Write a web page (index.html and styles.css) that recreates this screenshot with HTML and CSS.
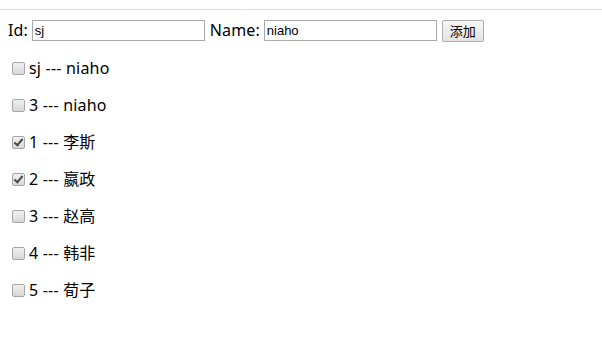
FILE: index.html
```html
<!DOCTYPE html>
<html>
<head>
<meta charset="utf-8">
<link rel="stylesheet" href="styles.css">
</head>
<body>
<div class="rule"></div>
<div class="app">
  <div class="form">
    <label class="lbl">Id:</label>
    <input class="field" type="text" value="sj">
    <label class="lbl">Name:</label>
    <input class="field" type="text" value="niaho">
    <button class="btn">添加</button>
  </div>
  <div class="list">
    <p class="item"><input class="check" type="checkbox"><span>sj --- niaho</span></p>
    <p class="item"><input class="check" type="checkbox"><span>3 --- niaho</span></p>
    <p class="item"><input class="check" type="checkbox" checked><span>1 --- 李斯</span></p>
    <p class="item"><input class="check" type="checkbox" checked><span>2 --- 嬴政</span></p>
    <p class="item"><input class="check" type="checkbox"><span>3 --- 赵高</span></p>
    <p class="item"><input class="check" type="checkbox"><span>4 --- 韩非</span></p>
    <p class="item"><input class="check" type="checkbox"><span>5 --- 荀子</span></p>
  </div>
</div>
</body>
</html>
```
FILE: styles.css
```css
html, body {
  margin: 0;
  padding: 0;
  background: #fff;
}
body {
  font-family: "Noto Sans", "Noto Sans CJK SC", sans-serif;
  font-size: 16px;
  color: #000;
}
.rule {
  margin-top: 9px;
  height: 1px;
  background: #dcdcdc;
}
.app {
  padding: 9px 8px 0 8px;
}
.form {
  display: flex;
  align-items: center;
  height: 23px;
  line-height: 21px;
}
.lbl {
  margin-right: 4px;
  letter-spacing: 0.1px;
}
.field {
  box-sizing: border-box;
  width: 173px;
  height: 21px;
  margin: 0 5px 0 0;
  padding: 1px 2px;
  border: 1px solid #a9a9a9;
  font-family: "Liberation Sans", sans-serif;
  font-size: 13px;
  color: #000;
  outline: none;
}
.btn {
  box-sizing: border-box;
  height: 22px;
  width: 42px;
  margin: 0;
  padding: 0;
  border: 1px solid #adadad;
  border-radius: 2px;
  background: linear-gradient(#f6f6f6, #e4e4e4);
  font-family: "Noto Sans CJK SC", sans-serif;
  font-size: 13px;
  color: #000;
}
.item {
  display: flex;
  align-items: center;
  margin: 16px 0;
  line-height: 21px;
  height: 21px;
  letter-spacing: 0.2px;
}
.check {
  -webkit-appearance: none;
  appearance: none;
  box-sizing: border-box;
  width: 13px;
  height: 13px;
  margin: 0 4px 0 4px;
  border: 1px solid #a6a6a6;
  border-radius: 2px;
  background: linear-gradient(#f0f0f0, #d8d8d8);
  position: relative;
}
.check:checked::after {
  content: "";
  position: absolute;
  left: 3px;
  top: 0px;
  width: 3px;
  height: 7px;
  border: solid #4a4a4a;
  border-width: 0 2px 2px 0;
  transform: rotate(40deg);
}
```
